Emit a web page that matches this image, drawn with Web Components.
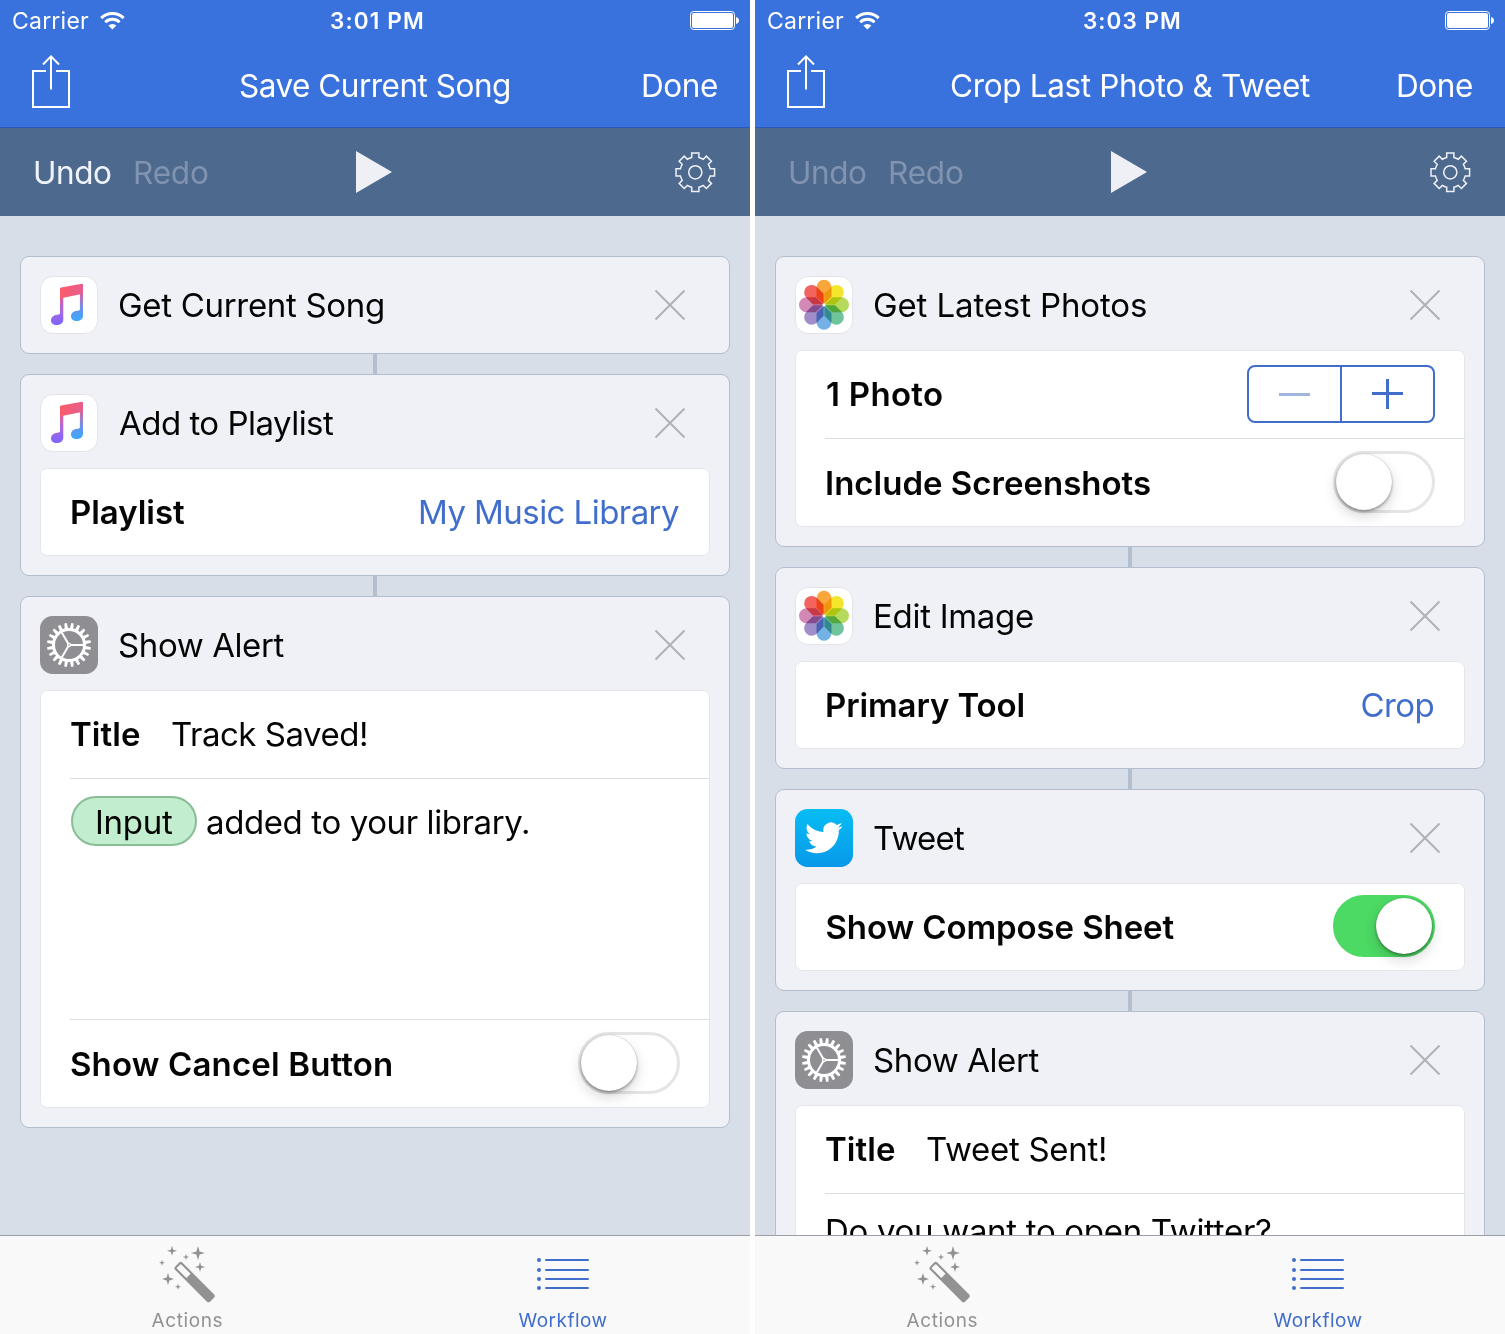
<!DOCTYPE html>
<html lang="en">
<head>
<meta charset="utf-8">
<title>Workflow</title>
<style>
  html, body { margin: 0; background: #fff; }
  body { display: grid; grid-template-columns: 750px 750px; column-gap: 5px; width: 1505px; height: 1334px; overflow: hidden; font-family: Inter, "Liberation Sans", sans-serif; }
</style>
</head>
<body>
<wf-screen>
  <wf-header slot="header" time="3:01 PM" time-width="92"><wf-text w="269" size="31.5">Save Current Song</wf-text></wf-header>
  <wf-toolbar slot="header" can-undo></wf-toolbar>
  <wf-card>
    <app-icon slot="icon" name="music"></app-icon><wf-text slot="title" w="264">Get Current Song</wf-text>
  </wf-card>
  <wf-link></wf-link>
  <wf-card>
    <app-icon slot="icon" name="music"></app-icon><wf-text slot="title" w="215">Add to Playlist</wf-text>
    <wf-row><wf-text bold w="113">Playlist</wf-text><wf-text slot="value" accent w="259">My Music Library</wf-text></wf-row>
  </wf-card>
  <wf-link></wf-link>
  <wf-card>
    <app-icon slot="icon" name="settings"></app-icon><wf-text slot="title" w="165.5">Show Alert</wf-text>
    <wf-row><wf-text bold style="margin-left:-1px" w="69">Title</wf-text><wf-text style="margin-left:32px" w="194">Track Saved!</wf-text></wf-row>
    <wf-message divided><wf-token><wf-text w="76">Input</wf-text></wf-token><wf-text style="margin-left:10px" w="321">added to your library.</wf-text></wf-message>
    <wf-row divided><wf-text bold style="margin-left:-1px" w="320">Show Cancel Button</wf-text><wf-switch slot="value"></wf-switch></wf-row>
  </wf-card>
</wf-screen>
<wf-screen>
  <wf-header slot="header" time="3:03 PM" time-width="96"><wf-text style="margin-left:2px" w="359" size="31.5">Crop Last Photo &amp; Tweet</wf-text></wf-header>
  <wf-toolbar slot="header"></wf-toolbar>
  <wf-card>
    <app-icon slot="icon" name="photos"></app-icon><wf-text slot="title" w="272">Get Latest Photos</wf-text>
    <wf-row><wf-text bold w="115">1 Photo</wf-text><wf-stepper slot="value"></wf-stepper></wf-row>
    <wf-row divided><wf-text bold w="323">Include Screenshots</wf-text><wf-switch slot="value"></wf-switch></wf-row>
  </wf-card>
  <wf-link></wf-link>
  <wf-card>
    <app-icon slot="icon" name="photos"></app-icon><wf-text slot="title" style="margin-left:22px" w="158">Edit Image</wf-text>
    <wf-row><wf-text bold w="196.5">Primary Tool</wf-text><wf-text slot="value" accent style="margin-right:.5px" w="72">Crop</wf-text></wf-row>
  </wf-card>
  <wf-link></wf-link>
  <wf-card>
    <app-icon slot="icon" name="twitter"></app-icon><wf-text slot="title" w="91">Tweet</wf-text>
    <wf-row><wf-text bold style="margin-left:-.5px" w="348">Show Compose Sheet</wf-text><wf-switch slot="value" on></wf-switch></wf-row>
  </wf-card>
  <wf-link></wf-link>
  <wf-card>
    <app-icon slot="icon" name="settings"></app-icon><wf-text slot="title" w="165.5">Show Alert</wf-text>
    <wf-row><wf-text bold style="margin-left:-1px" w="69">Title</wf-text><wf-text style="margin-left:32px" w="178">Tweet Sent!</wf-text></wf-row>
    <wf-message divided plain><wf-text w="444">Do you want to open Twitter?</wf-text></wf-message>
  </wf-card>
</wf-screen>

<script>
const define = (name, html, setup) => customElements.define(name, class extends HTMLElement {
  constructor() { super(); this.attachShadow({ mode: 'open' }); }
  connectedCallback() {
    this.shadowRoot.innerHTML = typeof html === 'function' ? html(this) : html;
    if (setup) setup(this);
  }
});

// Label whose glyph ink spans exactly `w` pixels; tracking is derived from the measured text.
const ctx = document.createElement('canvas').getContext('2d');
define('wf-text', el => `<style>
  :host { display: inline-block; flex: none; white-space: nowrap; width: ${el.getAttribute('w')}px; line-height: 1.25;
    font-size: ${el.getAttribute('size') || 33}px; font-weight: ${el.hasAttribute('bold') ? 600 : 400}; }
  :host([accent]) { color: #416ecb; }
  span { display: inline-block; }
  </style><span><slot></slot></span>`, el => {
  const text = el.textContent, w = +el.getAttribute('w');
  ctx.font = `${el.hasAttribute('bold') ? 600 : 400} ${el.getAttribute('size') || 33}px Inter, "Liberation Sans"`;
  const m = ctx.measureText(text);
  const ink = m.actualBoundingBoxLeft + m.actualBoundingBoxRight;
  const s = el.shadowRoot.querySelector('span').style;
  s.letterSpacing = ((w - ink) / (text.length - 1)).toFixed(3) + 'px';
  s.marginLeft = m.actualBoundingBoxLeft.toFixed(2) + 'px';
});

define('wf-screen', `<style>
  :host { display: flex; flex-direction: column; width: 750px; height: 1334px; overflow: hidden; background: #d8dee8; color: #050505; }
  main { flex: 1; min-height: 0; overflow: hidden; padding: 40px 20px 0; display: flex; flex-direction: column; align-items: stretch; }
  </style><slot name="header"></slot><main><slot></slot></main><wf-tabs></wf-tabs>`);

define('wf-header', el => `<style>
  :host { display: block; box-sizing: border-box; height: 128px; flex: none; background: #3971dd; border-bottom: 1px solid #2b57b5; color: #fff; }
  div { display: grid; grid-template-columns: 1fr auto 1fr; align-items: center; }
  .status { height: 41px; padding: 0 11px 0 13px; }
  .status wf-text { padding-top: 2px; }
  .status > wf-text { margin-left: 2px; }
  .nav { height: 86px; padding: 3px 33px 0 32px; box-sizing: border-box; }
  .l { display: flex; align-items: center; gap: 11px; }
  .r { justify-self: end; }
  svg { display: block; fill: none; stroke: #fff; }
  </style>
  <div class="status">
    <span class="l"><wf-text w="76" size="23">Carrier</wf-text>
      <svg width="25" height="19" viewBox="0 0 25 19"><path d="M1.2 7.1a16 16 0 0 1 22.4 0" stroke-width="3.1"/><path d="M5.2 11.2a10.3 10.3 0 0 1 14.4 0" stroke-width="2.8"/><path d="M12.4 18.6 8.4 14.6a5.7 5.7 0 0 1 8 0z" fill="#fff" stroke="none"/></svg></span>
    <wf-text bold w="${el.getAttribute('time-width')}" size="22.5">${el.getAttribute('time')}</wf-text>
    <svg class="r" width="49" height="19" viewBox="0 0 49 19"><rect x=".5" y=".5" width="44" height="18" rx="3.2"/><rect x="2" y="2" width="41" height="15" rx="2" fill="#fff" stroke="none"/><path d="M46 6v7c1.8-.4 3-1.700 3-3.500S47.800 6.400 46 6z" fill="#fff" stroke="none"/></svg>
  </div>
  <div class="nav">
    <svg width="40" height="54" viewBox="0 0 40 54" stroke-width="2" style="margin:-7px 0 0 -1px"><path d="M15 16H2v36h36V16H25M20 1v33.500M12 9.500 20 1.400 28 9.500"/></svg>
    <slot></slot><wf-text class="r" w="74" size="31.5">Done</wf-text>
  </div>`);

const cogOutline = (() => {
  const pts = [];
  for (let i = 0; i < 8; i++) {
    const a = i * Math.PI / 4;
    const at = (r, h) => { const t = a + Math.asin(h / r); return `${(21 + r * Math.sin(t)).toFixed(2)} ${(21 - r * Math.cos(t)).toFixed(2)}`; };
    pts.push((i ? 'A15.300 15.300 0 0 1 ' : 'M') + at(15.3, -3.6), 'L' + at(19.6, -3.6), 'L' + at(19.6, 3.6), 'L' + at(15.3, 3.6));
  }
  const end = Math.asin(-3.6 / 15.3);
  return pts.join('') + `A15.300 15.300 0 0 1 ${(21 + 15.3 * Math.sin(end)).toFixed(2)} ${(21 - 15.3 * Math.cos(end)).toFixed(2)}Z`;
})();

define('wf-toolbar', `<style>
  :host { display: grid; grid-template-columns: 1fr auto 1fr; align-items: center; height: 88px; flex: none; box-sizing: border-box; padding: 0 34px 0 35px; background: #4e698e; color: #8093b1; }
  .l { display: flex; gap: 24px; padding-top: 1px; }
  :host([can-undo]) .u { color: #f0f3fb; }
  svg { display: block; margin: 0 1px 0 -3px; } .g { justify-self: end; margin: 0; }
  </style>
  <span class="l"><wf-text class="u" w="76" size="31.5">Undo</wf-text><wf-text w="73" size="31.5">Redo</wf-text></span>
  <svg width="36" height="42" viewBox="0 0 36 42"><path d="M0 0v42l36-21z" fill="#eff0f6"/></svg>
  <svg class="g" width="42" height="42" viewBox="-.3 -.3 42 42" fill="none" stroke="#eef1f8" stroke-width="1.5"><path d="${cogOutline}"/><circle cx="21" cy="21" r="6.600"/></svg>`);

define('wf-link', `<style>:host { display: block; flex: none; width: 4px; height: 20px; align-self: center; background: #b1bfce; }</style>`);

define('wf-card', `<style>
  :host { display: block; flex: none; box-sizing: border-box; border: 1px solid #b3bfce; border-radius: 9px; background: #f0f1f6; padding: 19px; }
  header { display: flex; align-items: center; height: 58px; padding-right: 24px; }
  header svg { margin-left: auto; display: block; }
  ::slotted([slot=title]) { margin-left: 21px; padding-top: 2px; }
  section { margin-top: 16px; border-radius: 7px; background: #fff; box-shadow: inset 0 0 0 1px #e5e6ec; overflow: hidden; }
  section[hidden] { display: none; }
  </style>
  <header><slot name="icon"></slot><slot name="title"></slot>
    <svg width="32" height="32" viewBox="0 0 32 32" stroke="#b0b1b6" stroke-width="2"><path d="M1.500 1.500l29 29M30.500 1.500l-29 29"/></svg></header>
  <section><slot></slot></section>`, el => {
  el.shadowRoot.querySelector('section').hidden = !el.querySelector('wf-row');
});

define('wf-row', `<style>
  :host { display: flex; align-items: center; height: 88px; margin-left: 30px; padding: 0 31px 0 2px; }
  :host([divided]) { border-top: 1px solid #dcdde1; }
  ::slotted(wf-text) { padding-top: 2px; }
  ::slotted([slot=value]) { margin-left: auto; }
  </style><slot></slot><slot name="value"></slot>`);

define('wf-message', `<style>
  :host { display: flex; align-items: center; align-content: flex-start; flex-wrap: wrap; box-sizing: border-box; height: 241px; margin-left: 30px; padding: 17px 30px 0 1px; border-top: 1px solid #dcdde1; }
  :host([plain]) { padding: 14px 30px 0 2px; }
  ::slotted(wf-text) { padding-top: 3px; }
  </style><slot></slot>`);

define('wf-token', `<style>
  :host { display: flex; align-items: center; justify-content: center; box-sizing: border-box; width: 126px; height: 50px; border: 2px solid #89bd95; border-radius: 25px; background: #c3edcf; }
  ::slotted(wf-text) { padding: 3px 0 0 2px; }
  </style><slot></slot>`);

define('wf-switch', `<style>
  :host { display: block; position: relative; top: -1px; right: -1px; box-sizing: border-box; width: 102px; height: 62px; border-radius: 31px; border: 3px solid #e5e5e5; background: #fff; }
  i { display: block; width: 56px; height: 56px; border-radius: 50%; background: #fff; box-shadow: 0 6px 14px rgba(0,0,0,.16), 0 2px 3px rgba(0,0,0,.3), 0 0 1px rgba(0,0,0,.3); }
  :host([on]) { background: #4cd964; border-color: #4cd964; }
  :host([on]) i { margin-left: 40px; }
  </style><i></i>`);

define('wf-stepper', `<style>
  :host { display: flex; position: relative; right: -1px; box-sizing: border-box; width: 188px; height: 58px; border: 2px solid #416ecb; border-radius: 8px; }
  span { flex: 1; display: grid; place-items: center; }
  span + span { border-left: 2px solid #416ecb; }
  svg { display: block; }
  </style>
  <span><svg width="31" height="31" viewBox="0 0 31 31"><path d="M0 15.500h31" stroke="#9fb4df" stroke-width="3"/></svg></span>
  <span><svg width="31" height="31" viewBox="0 0 31 31"><path d="M0 14.500h31M15.500 -1v31" stroke="#416ecb" stroke-width="3"/></svg></span>`);

const icons = {
  music: () => `<defs><linearGradient id="g" x1="20" y1="8" x2="24" y2="49" gradientUnits="userSpaceOnUse"><stop offset="0" stop-color="#ff5a68"/><stop offset=".28" stop-color="#e2609a"/><stop offset=".65" stop-color="#a868dc"/><stop offset="1" stop-color="#7a64ff"/></linearGradient>
    <linearGradient id="h" x1="0" y1="8" x2="0" y2="45" gradientUnits="userSpaceOnUse"><stop offset="0" stop-color="#f95a70"/><stop offset=".3" stop-color="#c96aae"/><stop offset=".65" stop-color="#6e90e8"/><stop offset="1" stop-color="#38acff"/></linearGradient>
    <linearGradient id="b" x1="20" y1="10" x2="43" y2="18" gradientUnits="userSpaceOnUse"><stop offset="0" stop-color="#ff5a66"/><stop offset="1" stop-color="#e35f90"/></linearGradient></defs>
    <rect x=".5" y=".5" width="57" height="57" rx="12.500" fill="#fff" stroke="#e3e4e9"/>
    <path d="M20 14.500h3.300v29c0 3.300-2.600 5.500-6.500 5.500-3.500 0-5.800-1.900-5.800-4.600 0-3.100 2.400-5.300 6.300-5.700 1.800-.2 2.700-.5 2.700-2z" fill="url(#g)"/>
    <path d="M39.900 10H43v29.500c0 3.300-2.500 5.500-6.200 5.500-3.500 0-5.800-1.900-5.800-4.600 0-3.100 2.400-5.200 6.200-5.600 1.800-.2 2.700-.6 2.700-2.100z" fill="url(#h)"/>
    <path d="M21.200 11.600 41.900 7.700c.7-.1 1.100.3 1.100 1v9l-19.700 4.100L20 23V13c0-.8.400-1.200 1.200-1.400z" fill="url(#b)"/>`,
  photos: () => {
    const colors = ['#f9a63a', '#f4e62c', '#b7da5c', '#70c49c', '#74b2e6', '#a08ec8', '#d289b6', '#f2655f'];
    return `<rect x=".5" y=".5" width="57" height="57" rx="12.500" fill="#fff" stroke="#e3e4e9"/><g style="isolation:isolate">` +
      colors.map((c, i) => `<path d="M29 28.200 21.500 20.700V11.300a7.500 7.500 0 0 1 15 0v9.400z" fill="${c}" style="mix-blend-mode:multiply" transform="rotate(${i * 45} 29 28.800)"/>`).join('') + '</g><circle cx="29" cy="28.800" r="1.600" fill="#fff"/>';
  },
  settings: () => {
    let teeth = '';
    for (let i = 0; i < 20; i++) teeth += `<path d="M27.200 13 27.800 7h2.400l.6 6z" transform="rotate(${i * 18 + 9} 29 29)"/>`;
    return `<rect width="58" height="58" rx="12.500" fill="#8e8e93"/><g fill="#fff">${teeth}</g><circle cx="29" cy="29" r="15.500" fill="none" stroke="#fff" stroke-width="3"/>
      <path d="M29 29H44M29 29 21.500 16M29 29 21.500 42" stroke="#fff" stroke-width="2"/><circle cx="29" cy="29" r="2.200" fill="#fff"/><circle cx="29" cy="29" r=".8" fill="#8e8e93"/>`;
  },
  twitter: () => `<defs><linearGradient id="t" x2="0" y2="1"><stop stop-color="#08bdf3"/><stop offset="1" stop-color="#0798ea"/></linearGradient></defs><rect width="58" height="58" rx="12.500" fill="url(#t)"/>
    <path transform="translate(10 10) scale(1.570)" fill="#fff" d="M23.953 4.570a10 10 0 01-2.825.775 4.958 4.958 0 002.163-2.723c-.951.555-2.005.959-3.127 1.184a4.920 4.920 0 00-8.384 4.482C7.690 8.095 4.067 6.130 1.640 3.162a4.822 4.822 0 00-.666 2.475c0 1.710.870 3.213 2.188 4.096a4.904 4.904 0 01-2.228-.616v.060a4.923 4.923 0 003.946 4.827 4.996 4.996 0 01-2.212.085 4.936 4.936 0 004.604 3.417 9.867 9.867 0 01-6.102 2.105c-.390 0-.779-.023-1.170-.067a13.995 13.995 0 007.557 2.209c9.053 0 13.998-7.496 13.998-13.985 0-.210 0-.420-.015-.630A9.935 9.935 0 0024 4.590z"/>`
};
define('app-icon', el => `<style>:host { display: block; width: 58px; height: 58px; flex: none; } svg { display: block; }</style>
  <svg width="58" height="58" viewBox="0 0 58 58">${icons[el.getAttribute('name')]()}</svg>`);

const spark = (x, y, r) => { const k = r * .23; return `<path d="M${x} ${y - r}L${x + k} ${y - k}L${x + r} ${y}L${x + k} ${y + k}L${x} ${y + r}L${x - k} ${y + k}L${x - r} ${y}L${x - k} ${y - k}Z"/>`; };
define('wf-tabs', `<style>
  :host { display: grid; grid-template-columns: 1fr 1fr; box-sizing: border-box; height: 99px; flex: none; background: #f9f9f9; border-top: 1px solid #9a9faa; color: #929292; }
  div { display: flex; flex-direction: column; align-items: center; padding: 9px 1px 0 0; }
  .on { padding-right: 0; }
  svg { display: block; }
  .on { color: #416ecb; }
  wf-text { margin-top: 6px; }
  </style>
  <div><svg width="58" height="58" viewBox="28 20 58 58" fill="#929292">
    ${spark(42, 25.8, 5)}${spark(68, 28, 7)}${spark(56, 32, 3.200)}${spark(32, 37.800, 3)}${spark(70, 42, 5)}${spark(38, 54, 6)}${spark(48, 61.800, 3.200)}
    <g transform="translate(48.600 40.600) rotate(45)"><rect x="-1.800" y="-4.800" width="49.500" height="10.200" rx="2.500"/><rect x=".3" y="-2.700" width="14" height="6" rx=".8" fill="#f9f9f9"/></g></svg>
    <wf-text w="71" size="19">Actions</wf-text></div>
  <div class="on"><svg width="54" height="58" viewBox="0 0 54 58" fill="#416ecb" stroke="#416ecb" stroke-width="2" stroke-linecap="round">
    ${[15, 25, 34, 43].map(y => `<circle cx="3" cy="${y}" r="2" stroke="none"/><path d="M10 ${y}H52"/>`).join('')}</svg>
    <wf-text w="88" size="19">Workflow</wf-text></div>`);
</script>
</body>
</html>
